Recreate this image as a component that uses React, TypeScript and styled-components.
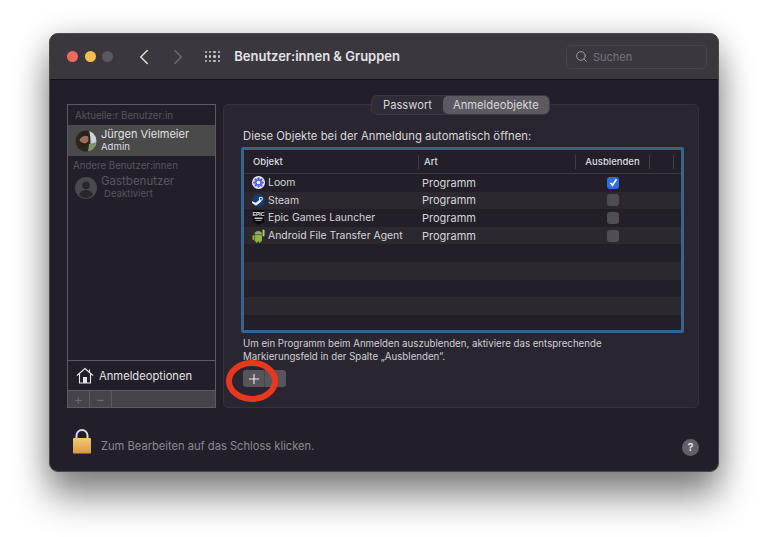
import React from 'react';
import styled, { createGlobalStyle } from 'styled-components';
import { ChevronLeft, ChevronRight, Search } from 'lucide-react';

const GlobalStyle = createGlobalStyle`
  html, body {
    margin: 0;
    padding: 0;
    background: #fff;
    font-family: "Inter", "Liberation Sans", sans-serif;
    overflow: hidden;
  }
`;

const Page = styled.div`
  width: 768px;
  height: 537px;
  padding: 33px 49px 0;
  box-sizing: border-box;
  overflow: hidden;
`;

const Window = styled.div`
  width: 670px;
  height: 439px;
  border-radius: 9px;
  background: #231f2a;
  box-shadow: 0 26px 36px rgba(0, 0, 0, 0.42), 0 4px 30px rgba(0, 0, 0, 0.22);
  border: 1px solid #4a4850;
  box-sizing: border-box;
  display: flex;
  flex-direction: column;
  overflow: hidden;
  position: relative;
`;

const TitleBar = styled.div`
  height: 45px;
  flex: none;
  background: #3a383e;
  border-bottom: 1px solid #15131a;
  display: flex;
  align-items: center;
  padding-left: 17px;
  padding-right: 11px;
`;

const Light = styled.span<{ $color: string }>`
  width: 11px;
  height: 11px;
  border-radius: 50%;
  background: ${(p) => p.$color};
  margin-right: 6.5px;
`;

const NavButton = styled.span<{ $dim?: boolean; $gap: number }>`
  display: flex;
  margin-left: ${(p) => p.$gap}px;
  color: ${(p) => (p.$dim ? '#6a686e' : '#d6d5d8')};
`;

const GridIcon = styled.div`
  display: grid;
  grid-template-columns: repeat(4, 2.6px);
  grid-auto-rows: 2.6px;
  gap: 1.8px;
  margin-left: 14px;
  & > i { background: #c9c8cc; border-radius: 50%; }
`;

const Title = styled.div`
  margin-left: 14px;
  margin-top: -1px;
  font-size: 13px;
  font-weight: 600;
  color: #e4e3e6;
  white-space: nowrap;
`;

const SearchBox = styled.div`
  margin-left: auto;
  width: 141px;
  height: 24px;
  box-sizing: border-box;
  border: 1px solid #47454b;
  border-radius: 5px;
  display: flex;
  align-items: center;
  gap: 5px;
  padding-left: 8px;
  font-size: 11px;
  color: #77757b;
  & > svg { color: #a8a7ab; }
`;

const Body = styled.div`
  flex: none;
  display: flex;
  gap: 7px;
  padding: 24px 19px 0 17px;
  height: 304px;
`;

const Sidebar = styled.div`
  width: 149px;
  height: 304px;
  flex: none;
  box-sizing: border-box;
  border: 1px solid #5d5b62;
  display: flex;
  flex-direction: column;
`;

const SectionLabel = styled.div<{ $indent: number; $height: number }>`
  height: ${(p) => p.$height}px;
  display: flex;
  align-items: center;
  padding-left: ${(p) => p.$indent}px;
  font-size: 9.7px;
  color: #57555c;
  white-space: nowrap;
`;

const UserRow = styled.div<{ $selected?: boolean }>`
  height: ${(p) => (p.$selected ? 31 : 25)}px;
  display: flex;
  align-items: center;
  gap: 4px;
  padding-left: 7px;
  background: ${(p) => (p.$selected ? '#4a4a4a' : 'transparent')};
`;

const UserText = styled.div`
  display: flex;
  flex-direction: column;
  margin-top: -1px;
`;

const UserName = styled.div<{ $dim?: boolean }>`
  font-size: ${(p) => (p.$dim ? 11.5 : 11)}px;
  line-height: ${(p) => (p.$dim ? 14 : 13)}px;
  color: ${(p) => (p.$dim ? '#5a585f' : '#e2e1e3')};
  white-space: nowrap;
`;

const UserSub = styled.div<{ $dim?: boolean }>`
  font-size: 9.6px;
  line-height: 12px;
  color: ${(p) => (p.$dim ? '#56545b' : '#dedde0')};
  padding-left: ${(p) => (p.$dim ? 3 : 0)}px;
`;

const Spacer = styled.div`
  flex: 1;
`;

const OptionsRow = styled.div`
  height: 30px;
  box-sizing: border-box;
  border-top: 1px solid #5d5b62;
  display: flex;
  align-items: center;
  gap: 5px;
  padding-left: 8px;
  font-size: 11.2px;
  color: #e2e1e3;
`;

const SideActions = styled.div`
  height: 17px;
  box-sizing: border-box;
  background: #46444a;
  border-top: 1px solid #5d5b62;
  display: flex;
`;

const SideAction = styled.div`
  width: 21px;
  border-right: 1px solid #5d5b62;
  color: #6b696f;
  font-size: 14px;
  line-height: 16px;
  text-align: center;
`;

const Panel = styled.div`
  width: 477px;
  height: 304px;
  box-sizing: border-box;
  border: 1px solid #33313a;
  border-radius: 5px;
  background: #2a2631;
  padding: 24px 14px 0 17px;
  position: relative;
`;

const Tabs = styled.div`
  position: absolute;
  top: -9px;
  left: 148px;
  height: 18px;
  display: flex;
  border-radius: 5px;
  background: #2f2c35;
  box-shadow: 0 0 0 1px #3a3840;
  font-size: 11.2px;
`;

const Tab = styled.div<{ $active?: boolean }>`
  padding: 0 ${(p) => (p.$active ? 10 : 11)}px;
  line-height: 18px;
  color: #d8d7da;
  border-radius: 5px;
  background: ${(p) => (p.$active ? '#5c5a60' : 'transparent')};
`;

const Heading = styled.div`
  font-size: 11.3px;
  line-height: 14px;
  color: #d8d7da;
  padding-left: 2px;
  margin-bottom: 4px;
  white-space: nowrap;
`;

const TableFrame = styled.div`
  width: 443px;
  height: 186px;
  box-sizing: border-box;
  border: 3px solid #35648f;
  border-radius: 2px;
  background: #221f28;
  overflow: hidden;
`;

const HeaderRow = styled.div`
  height: 24px;
  box-sizing: border-box;
  border-bottom: 1px solid #3a3840;
  display: grid;
  grid-template-columns: 175px 157px 74px 24px;
  align-items: center;
  font-size: 9.5px;
  font-weight: 500;
  color: #dedde0;
`;

const HeaderCell = styled.div<{ $center?: boolean; $divider?: boolean; $indent?: number }>`
  height: 14px;
  line-height: 14px;
  padding-left: ${(p) => (p.$center ? 0 : p.$indent ?? 9)}px;
  text-align: ${(p) => (p.$center ? 'center' : 'left')};
  border-right: ${(p) => (p.$divider ? '1px solid #3f3d45' : 'none')};
  box-sizing: border-box;
`;

const Row = styled.div<{ $alt: boolean }>`
  height: 17.6px;
  display: grid;
  grid-template-columns: 175px 157px 74px;
  align-items: center;
  background: ${(p) => (p.$alt ? '#2b2830' : 'transparent')};
`;

const NameCell = styled.div`
  display: flex;
  align-items: center;
  gap: 3px;
  padding-left: 8px;
  font-size: 10.4px;
  color: #d6d5d8;
  white-space: nowrap;
`;

const KindCell = styled.div`
  font-size: 11px;
  padding-left: 3px;
  color: #d6d5d8;
`;

const CheckCell = styled.div`
  display: flex;
  justify-content: center;
`;

const Check = styled.span<{ $on?: boolean }>`
  width: 12px;
  height: 12px;
  border-radius: 3px;
  background: ${(p) => (p.$on ? '#2f6fdc' : '#504e55')};
  display: flex;
  align-items: center;
  justify-content: center;
`;

const Hint = styled.div`
  margin-top: 5px;
  padding-left: 2px;
  font-size: 9.7px;
  line-height: 12.5px;
  color: #d0cfd3;
  white-space: nowrap;
`;

const AddRemove = styled.div`
  width: 43px;
  height: 17px;
  margin: 7px 0 0 2px;
  border-radius: 3px;
  background: #57555b;
  display: flex;
`;

const AddButton = styled.div`
  width: 21px;
  border-right: 1px solid #47454b;
  display: flex;
  align-items: center;
  justify-content: center;
`;

const RedRing = styled.svg`
  position: absolute;
  left: 2px;
  top: 254px;
`;

const Footer = styled.div`
  flex: 1;
  display: flex;
  align-items: center;
  padding: 4px 19px 0 22px;
  gap: 9px;
  font-size: 11.15px;
  color: #8b898f;
`;

const FooterText = styled.span`
  margin-top: 9px;
`;

const HelpButton = styled.div`
  margin-left: auto;
  margin-top: 12px;
  width: 17px;
  height: 17px;
  border-radius: 50%;
  background: #626066;
  color: #e8e7ea;
  font-size: 11px;
  font-weight: 600;
  text-align: center;
  line-height: 17px;
`;

const Avatar = () => (
  <svg width="22" height="22" viewBox="0 0 22 22">
    <defs>
      <clipPath id="av"><circle cx="11" cy="11" r="10.5" /></clipPath>
    </defs>
    <g clipPath="url(#av)">
      <rect width="22" height="22" fill="#2c2622" />
      <path d="M14 0h8v22h-8c2-6 2-14 0-22z" fill="#c9d6dc" />
      <path d="M14 14l8-2v10h-9z" fill="#7f9468" />
      <ellipse cx="9" cy="9" rx="4.5" ry="5" fill="#9a6f55" />
      <path d="M4 10c0-6 3-8 6-8s4 2 4 5c-3-2-6-2-10 3z" fill="#2a1f18" />
      <path d="M5 11c1 4 3 6 5 6s3-2 3-5c-2 2-5 2-8-1z" fill="#2a1f18" />
    </g>
  </svg>
);

const GuestIcon = () => (
  <svg width="22" height="22" viewBox="0 0 21 21">
    <circle cx="10.5" cy="10.5" r="10.5" fill="#4a484f" />
    <circle cx="10.5" cy="8" r="3.6" fill="#29262e" />
    <path d="M4 17c1-3.5 4-4.5 6.5-4.5S16 13.500 17 17c-1.800 2.200-4 3-6.500 3S5.800 19.200 4 17z" fill="#29262e" />
  </svg>
);

const HomeIcon = () => (
  <svg width="18" height="17" viewBox="0 0 18 17" fill="none" stroke="#e6e5e8" strokeWidth="1.100">
    <path d="M1 8.500L9 1.500l8 7" />
    <path d="M13.500 2.500v3" />
    <path d="M3.500 7v9h11V7" />
    <rect x="7" y="10" width="4" height="6" fill="#e6e5e8" stroke="none" />
  </svg>
);

const LockIcon = () => (
  <svg width="20" height="25" viewBox="0 0 20 25">
    <defs>
      <linearGradient id="lockBody" x1="0" y1="0" x2="0" y2="1">
        <stop offset="0" stopColor="#f3c877" />
        <stop offset="1" stopColor="#d99a45" />
      </linearGradient>
    </defs>
    <path d="M4.500 10V6.500a5.500 5.500 0 0 1 11 0V10" fill="none" stroke="#d8d7da" strokeWidth="2" />
    <rect x="1" y="9" width="18" height="15.500" rx="1" fill="url(#lockBody)" />
  </svg>
);

const LoomIcon = () => (
  <svg width="13" height="13" viewBox="0 0 13 13">
    <circle cx="6.500" cy="6.500" r="6.500" fill="#eef0fb" />
    <g fill="#5c5fe0">
      {[0, 45, 90, 135].map((a) => (
        <rect key={a} x="5.300" y="1.200" width="2.400" height="10.600" rx="1.200" transform={`rotate(${a} 6.500 6.500)`} />
      ))}
    </g>
    <circle cx="6.500" cy="6.500" r="1.800" fill="#eef0fb" />
  </svg>
);

const SteamIcon = () => (
  <svg width="13" height="13" viewBox="0 0 13 13">
    <circle cx="6.500" cy="6.500" r="6.500" fill="#163c6b" />
    <path d="M0 7.200l3.800 1.600 3.600-3 2 1.700-4.400 3.600c-1 .6-2.200.3-2.700-.6L0 9z" fill="#e8edf2" />
    <circle cx="8.800" cy="4.800" r="2.100" fill="#e8edf2" />
    <circle cx="8.800" cy="4.800" r="1" fill="#163c6b" />
  </svg>
);

const EpicIcon = () => (
  <svg width="13" height="15" viewBox="0 0 13 15">
    <path d="M1 0h11v12l-5.500 3L1 12z" fill="#0c0c0e" />
    <text x="6.500" y="6.200" textAnchor="middle" fontSize="5" fontWeight="700" fill="#f0f0f0" fontFamily="Liberation Sans Narrow, Liberation Sans, sans-serif">EPIC</text>
    <rect x="2.500" y="7.500" width="8" height="1.600" fill="#c4c4c4" />
    <rect x="3.500" y="10" width="6" height="1" fill="#8a8a8a" />
  </svg>
);

const AndroidIcon = () => (
  <svg width="13" height="14" viewBox="0 0 13 14">
    <rect x="2.500" y="6" width="7.500" height="6.500" rx="1" fill="#8fb33c" />
    <path d="M2.500 5.500a3.750 3.500 0 0 1 7.500 0z" fill="#8fb33c" />
    <rect x="0.500" y="6" width="1.500" height="5" rx="0.750" fill="#8fb33c" />
    <rect x="4" y="11" width="1.500" height="3" rx="0.750" fill="#8fb33c" />
    <rect x="7" y="11" width="1.500" height="3" rx="0.750" fill="#8fb33c" />
    <rect x="10.500" y="0.500" width="2" height="7" rx="1" fill="#b5c95a" />
  </svg>
);

const apps = [
  { name: 'Loom', icon: <LoomIcon />, hidden: true },
  { name: 'Steam', icon: <SteamIcon />, hidden: false },
  { name: 'Epic Games Launcher', icon: <EpicIcon />, hidden: false },
  { name: 'Android File Transfer Agent', icon: <AndroidIcon />, hidden: false },
];

const App: React.FC = () => {
  const rows = Array.from({ length: 9 }, (_, i) => apps[i] ?? null);

  return (
    <Page>
      <GlobalStyle />
      <Window>
        <TitleBar>
          <Light $color="#ee6a5f" />
          <Light $color="#f5bf4f" />
          <Light $color="#5a585e" />
          <NavButton $gap={11}><ChevronLeft size={26} strokeWidth={1.5} /></NavButton>
          <NavButton $dim $gap={8}><ChevronRight size={26} strokeWidth={1.5} /></NavButton>
          <GridIcon>
            {Array.from({ length: 12 }, (_, i) => <i key={i} />)}
          </GridIcon>
          <Title>Benutzer:innen &amp; Gruppen</Title>
          <SearchBox>
            <Search size={13} strokeWidth={1.6} />
            Suchen
          </SearchBox>
        </TitleBar>

        <Body>
          <Sidebar>
            <SectionLabel $indent={7} $height={20}>Aktuelle:r Benutzer:in</SectionLabel>
            <UserRow $selected>
              <Avatar />
              <UserText>
                <UserName>Jürgen Vielmeier</UserName>
                <UserSub>Admin</UserSub>
              </UserText>
            </UserRow>
            <SectionLabel $indent={5} $height={19}>Andere Benutzer:innen</SectionLabel>
            <UserRow>
              <GuestIcon />
              <UserText>
                <UserName $dim>Gastbenutzer</UserName>
                <UserSub $dim>Deaktiviert</UserSub>
              </UserText>
            </UserRow>
            <Spacer />
            <OptionsRow>
              <HomeIcon />
              Anmeldeoptionen
            </OptionsRow>
            <SideActions>
              <SideAction>+</SideAction>
              <SideAction>−</SideAction>
            </SideActions>
          </Sidebar>

          <Panel>
            <Tabs>
              <Tab>Passwort</Tab>
              <Tab $active>Anmeldeobjekte</Tab>
            </Tabs>
            <Heading>Diese Objekte bei der Anmeldung automatisch öffnen:</Heading>
            <TableFrame>
              <HeaderRow>
                <HeaderCell $divider>Objekt</HeaderCell>
                <HeaderCell $divider $indent={5}>Art</HeaderCell>
                <HeaderCell $center $divider>Ausblenden</HeaderCell>
                <HeaderCell $divider />
              </HeaderRow>
              {rows.map((app, i) => (
                <Row key={i} $alt={i % 2 === 1}>
                  {app && (
                    <>
                      <NameCell>{app.icon}{app.name}</NameCell>
                      <KindCell>Programm</KindCell>
                      <CheckCell>
                        <Check $on={app.hidden}>
                          {app.hidden && (
                            <svg width="9" height="9" viewBox="0 0 9 9" fill="none" stroke="#fff" strokeWidth="1.600">
                              <path d="M1.500 4.800l2 2.500 4-6" />
                            </svg>
                          )}
                        </Check>
                      </CheckCell>
                    </>
                  )}
                </Row>
              ))}
            </TableFrame>
            <Hint>
              Um ein Programm beim Anmelden auszublenden, aktiviere das entsprechende
              <br />
              Markierungsfeld in der Spalte „Ausblenden“.
            </Hint>
            <AddRemove>
              <AddButton>
                <svg width="10" height="10" viewBox="0 0 10 10" stroke="#f0eff2" strokeWidth="1.100">
                  <path d="M5 0v10M0 5h10" />
                </svg>
              </AddButton>
            </AddRemove>
            <RedRing width="54" height="44" viewBox="0 0 54 44">
              <ellipse cx="26" cy="22" rx="23" ry="18" fill="none" stroke="#e8391f" strokeWidth="6" />
            </RedRing>
          </Panel>
        </Body>

        <Footer>
          <LockIcon />
          <FooterText>Zum Bearbeiten auf das Schloss klicken.</FooterText>
          <HelpButton>?</HelpButton>
        </Footer>
      </Window>
    </Page>
  );
};

export default App;
